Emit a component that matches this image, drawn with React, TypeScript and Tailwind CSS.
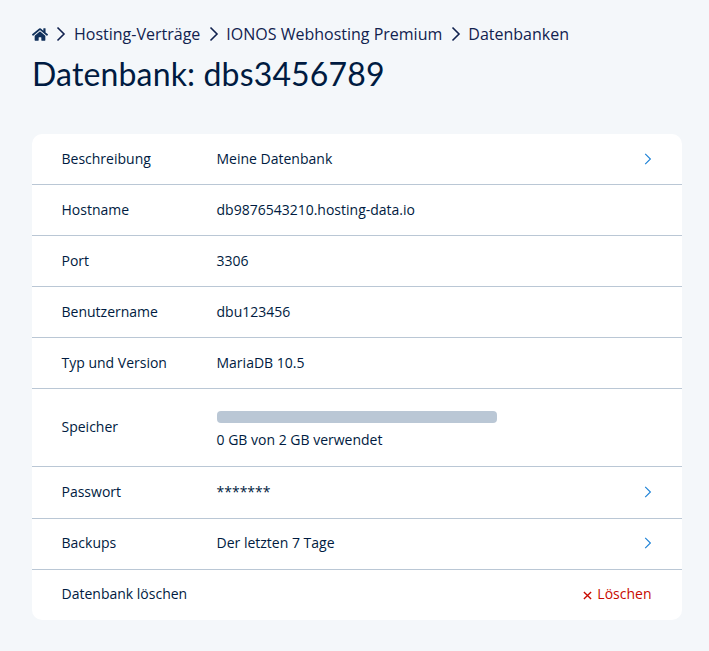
import { FaHome } from "react-icons/fa";

const Chevron = ({ className, w = 1.6 }: { className: string; w?: number }) => (
  <svg viewBox="0 0 10 16" fill="none" stroke="currentColor" className={className}>
    <path d="M1.5 1.5 L8 8 L1.5 14.5" strokeWidth={w} strokeLinecap="butt" strokeLinejoin="miter" />
  </svg>
);

const Sep = () => <Chevron className="w-[10px] h-[16px] text-[#11224f] shrink-0" />;

type RowProps = { label: string; children?: React.ReactNode; right?: React.ReactNode; h: string };

const Row = ({ label, children, right, h }: RowProps) => (
  <div className={`flex items-center border-b border-[#bac7d5] last:border-b-0 pl-[29.5px] pr-[30.5px] ${h}`}>
    <div className="w-[155px] shrink-0">{label}</div>
    <div className="flex-1 min-w-0">{children}</div>
    {right}
  </div>
);

const Arrow = () => <Chevron className="w-[8px] h-[14px] text-[#1b80d6]" w={1.4} />;

export default function App() {
  return (
    <div className="min-h-[651px] bg-[#f4f7fa] pl-[32px] pr-[27px] pt-[24px] pb-[31px] text-[#001b41] text-[14px] leading-[20px] font-['Open_Sans',sans-serif]">
      <nav className="flex items-center h-[20px] text-[16px] text-[#11224f]">
        <FaHome className="w-[16px] h-[15px] text-[#11315b] mr-[8px]" />
        <Sep />
        <span className="ml-[8px] mr-[9px]">Hosting-Verträge</span>
        <Sep />
        <span className="ml-[7px] mr-[9px]">IONOS Webhosting Premium</span>
        <Sep />
        <span className="ml-[7px]">Datenbanken</span>
      </nav>
      <h1 className="mt-[9px] text-[32px] leading-[42px] tracking-[0.15px] font-normal font-['Lato',sans-serif] text-[#001b41]">
        Datenbank: dbs3456789
      </h1>
      <div className="mt-[39px] bg-white rounded-[10px] overflow-hidden">
        <Row label="Beschreibung" h="h-[51px] pb-[1px]" right={<Arrow />}>Meine Datenbank</Row>
        <Row label="Hostname" h="h-[51px] pb-[1px]">db9876543210.hosting-data.io</Row>
        <Row label="Port" h="h-[51px] pb-[1px]">3306</Row>
        <Row label="Benutzername" h="h-[51px] pb-[1px]">dbu123456</Row>
        <Row label="Typ und Version" h="h-[51px] pb-[1px]">MariaDB 10.5</Row>
        <Row label="Speicher" h="h-[78px] pb-[1px]">
          <div className="w-[280px] h-[12px] rounded-[4px] bg-[#bac7d5] mt-[7px] mb-[7px]" />
          <div>0 GB von 2 GB verwendet</div>
        </Row>
        <Row label="Passwort" h="h-[52px] pb-[2px]" right={<Arrow />}>*******</Row>
        <Row label="Backups" h="h-[51px] pb-[2px]" right={<Arrow />}>Der letzten 7 Tage</Row>
        <Row
          label="Datenbank löschen"
          h="h-[50px] pb-[2px]"
          right={
            <span className="flex items-center text-[#c80a00]">
              <svg viewBox="0 0 10 10" className="w-[9px] h-[9px] mr-[5px] mt-[2px]" stroke="currentColor" strokeWidth="1.5">
                <path d="M1 1 L9 9 M9 1 L1 9" />
              </svg>
              Löschen
            </span>
          }
        />
      </div>
    </div>
  );
}
